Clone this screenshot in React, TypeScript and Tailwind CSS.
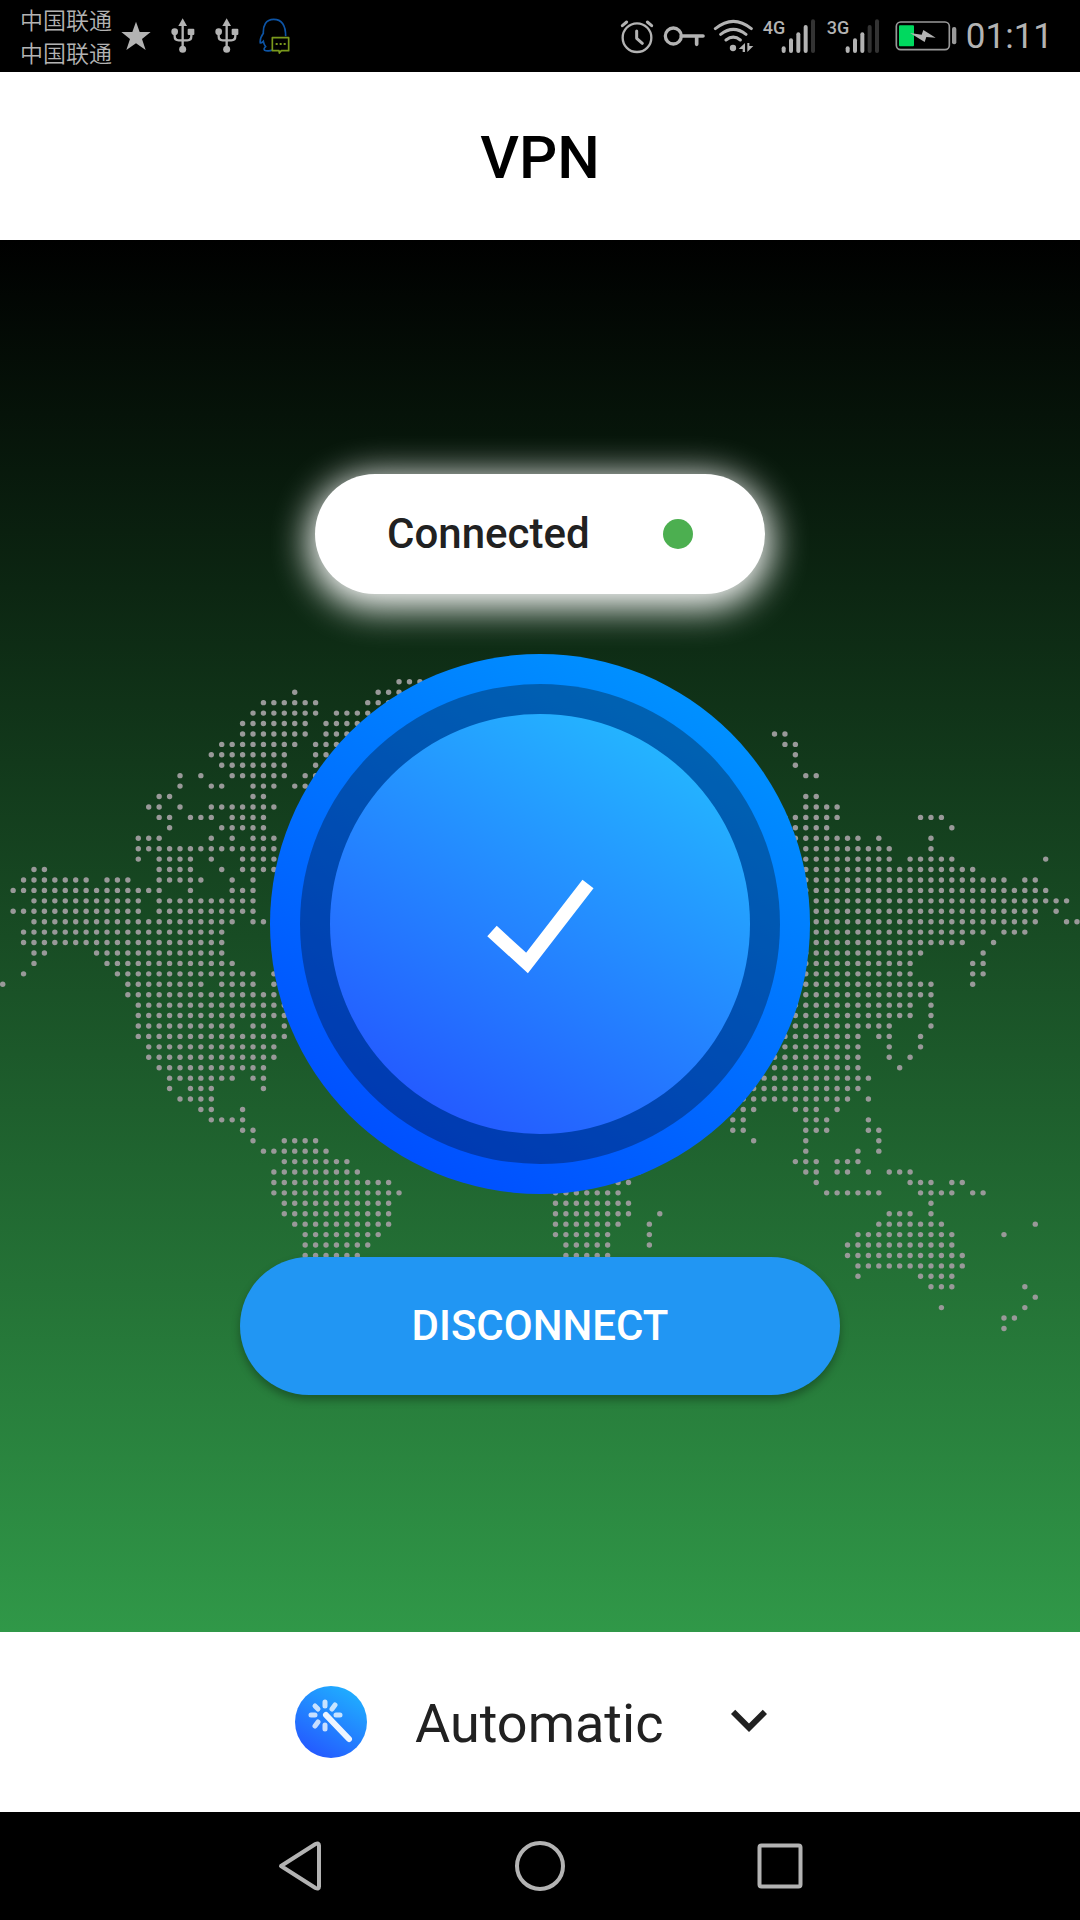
import React from "react";

type Range = [number, number];

const DOT_ROWS: Record<number, Range[]> = {
  0: [[38, 40]],
  1: [[28, 28], [36, 40]],
  2: [[25, 30], [35, 39]],
  3: [[24, 30], [32, 36]],
  4: [[23, 29], [31, 35]],
  5: [[23, 29], [31, 34], [74, 75]],
  6: [[21, 28], [30, 32], [75, 76]],
  7: [[20, 27], [30, 31], [76, 76]],
  8: [[21, 27], [30, 30], [76, 76]],
  9: [[17, 17], [19, 19], [22, 27], [29, 30], [77, 78]],
  10: [[17, 17], [20, 21], [24, 26], [28, 29]],
  11: [[15, 16], [24, 25], [77, 78]],
  12: [[14, 15], [17, 17], [20, 26], [77, 80]],
  13: [[15, 16], [18, 20], [22, 25], [75, 80], [88, 90]],
  14: [[16, 16], [21, 25], [76, 79], [91, 91]],
  15: [[13, 15], [20, 20], [22, 22], [24, 26], [76, 82], [84, 84], [89, 89]],
  16: [[13, 26], [77, 85], [89, 89]],
  17: [[13, 13], [15, 18], [20, 20], [23, 26], [77, 85], [87, 91], [100, 100]],
  18: [[3, 4], [15, 18], [21, 21], [23, 26], [77, 93]],
  19: [[2, 8], [10, 12], [15, 19], [22, 22], [24, 24], [77, 96], [98, 99]],
  20: [[1, 15], [18, 18], [22, 24], [77, 100]],
  21: [[3, 13], [15, 24], [77, 102]],
  22: [[1, 13], [15, 24], [77, 99], [101, 101]],
  23: [[3, 22], [24, 25], [77, 99], [102, 103]],
  24: [[2, 21], [77, 94], [96, 98]],
  25: [[2, 21], [77, 92], [95, 95]],
  26: [[3, 4], [9, 21], [77, 88], [94, 94]],
  27: [[3, 3], [10, 22], [77, 87], [93, 94]],
  28: [[2, 2], [11, 24], [26, 26], [77, 87], [93, 94]],
  29: [[0, 0], [12, 19], [21, 24], [26, 26], [77, 89], [93, 93]],
  30: [[12, 26], [77, 89]],
  31: [[13, 27], [76, 87], [89, 89]],
  32: [[13, 27], [76, 87], [89, 89]],
  33: [[13, 22], [24, 25], [27, 27], [76, 85], [89, 89]],
  34: [[13, 27], [75, 82], [84, 85], [88, 88]],
  35: [[14, 26], [75, 82], [85, 85], [88, 88]],
  36: [[14, 26], [74, 82], [85, 85], [87, 87]],
  37: [[15, 25], [74, 82], [86, 86]],
  38: [[16, 22], [24, 25], [73, 83]],
  39: [[16, 16], [18, 20], [25, 25], [72, 82]],
  40: [[17, 20], [71, 81], [83, 83]],
  41: [[19, 20], [23, 23], [70, 72], [76, 78], [80, 80]],
  42: [[20, 23], [70, 71], [77, 79], [83, 83]],
  43: [[23, 24], [70, 71], [77, 79], [83, 84]],
  44: [[24, 24], [27, 30], [72, 72], [77, 77], [84, 84]],
  45: [[25, 31], [77, 77], [82, 82], [84, 84]],
  46: [[27, 33], [76, 78], [80, 82]],
  47: [[26, 34], [61, 61], [77, 78], [80, 81], [83, 83], [85, 87]],
  48: [[26, 37], [59, 60], [78, 78], [87, 89], [91, 92]],
  49: [[26, 38], [53, 59], [79, 84], [88, 91], [93, 94]],
  50: [[27, 37], [53, 60], [89, 89]],
  51: [[27, 37], [53, 60], [63, 63], [85, 87], [89, 89]],
  52: [[28, 37], [53, 59], [62, 62], [84, 90], [99, 99]],
  53: [[29, 36], [53, 58], [62, 62], [82, 91], [96, 96]],
  54: [[29, 35], [54, 58], [62, 62], [81, 91]],
  55: [[29, 34], [54, 58], [81, 92]],
  56: [[82, 92]],
  57: [[82, 82], [88, 91]],
  58: [[89, 91], [98, 98]],
  59: [[99, 99]],
  60: [[90, 90], [98, 98]],
  61: [[96, 97]],
  62: [[96, 96]],
};

const STEP = 10.43;

function WorldMap() {
  const dots: React.ReactNode[] = [];
  for (const [row, ranges] of Object.entries(DOT_ROWS)) {
    for (const [from, to] of ranges) {
      for (let col = from; col <= to; col++) {
        dots.push(
          <circle key={`${row}-${col}`} cx={2.7 + col * STEP} cy={441.8 + Number(row) * STEP} r="2.7" />,
        );
      }
    }
  }
  return (
    <svg
      className="absolute inset-0 h-full w-full"
      viewBox="0 0 1080 1392"
      preserveAspectRatio="xMidYMid slice"
      fill="#999999"
      aria-hidden="true"
    >
      {dots}
    </svg>
  );
}

function StarIcon() {
  return (
    <svg className="h-[30px] w-[30px]" viewBox="364 64 90 90" fill="#b3b3b3">
      <path d="M409 66l11 31h33l-26 21 11 33-29-20-29 20 11-33-26-21h33z" />
    </svg>
  );
}

function UsbIcon() {
  return (
    <svg className="h-9 w-6" viewBox="509 56 72 108" fill="#b3b3b3">
      <path d="M544 57l13 23h-26z" />
      <path d="M544 76v74M520 98v13q0 12 12 12h26q12 0 12-12V98" fill="none" stroke="#b3b3b3" strokeWidth="7" />
      <circle cx="520" cy="97" r="10" />
      <rect x="559" y="88" width="20" height="19" rx="3" />
      <circle cx="544" cy="150" r="10.500" />
    </svg>
  );
}

function MessageIcon() {
  return (
    <svg className="h-9 w-[31px]" viewBox="769 57 93 108" fill="none">
      <path
        d="M849 112C849 80 838 61 813 61C789 61 781 80 782 103C775 113 771 123 773 132C777 132 780 129 782 127C783 134 786 139 789 143C784 147 783 151 786 154C792 157 803 156 808 153"
        stroke="#0d54a5"
        strokeWidth="5"
      />
      <path d="M809 116h49v39h-22l-6 7-1-7h-20z" fill="#000" stroke="#7a991c" strokeWidth="5" strokeLinejoin="round" />
      <path d="M819 135h6M831 135h6M843 135h6" stroke="#7a991c" strokeWidth="6" />
    </svg>
  );
}

function AlarmIcon() {
  return (
    <svg className="h-9 w-9" viewBox="56 54 108 108" fill="none" stroke="#b3b3b3" strokeLinecap="round">
      <circle cx="110" cy="113" r="43" strokeWidth="7" />
      <path d="M109 93v22l17 15" strokeWidth="9" strokeLinejoin="round" />
      <path d="M66 77l13-11M154 77l-13-11" strokeWidth="9" />
    </svg>
  );
}

function KeyIcon() {
  return (
    <svg className="h-6 w-[42px]" viewBox="192 70 126 72" fill="none" stroke="#b3b3b3">
      <circle cx="223" cy="106" r="24" strokeWidth="10" />
      <path d="M247 106h65M293 108v23" strokeWidth="11" strokeLinecap="round" />
    </svg>
  );
}

function WifiIcon() {
  return (
    <svg className="h-9 w-[42px]" viewBox="342 54 126 108" fill="none" stroke="#b3b3b3" strokeWidth="9" strokeLinecap="round">
      <path d="M349 86q54-44 108 0M365 103q38-30 76 0M381 120q22-17 43 0" />
      <circle cx="402" cy="144" r="9.500" fill="#b3b3b3" stroke="none" />
      <path d="M438 129v27h-7v-9h-12zM445 129h6v9h12l-18 18z" fill="#b3b3b3" stroke="none" />
    </svg>
  );
}

function Signal({ label, bars }: { label: string; bars: number }) {
  const tops = [142, 118, 100, 78, 61];
  return (
    <div className="flex w-[54px] items-start justify-between">
      <span className="h-9 w-[18px] font-[Roboto] text-lg leading-5 font-medium text-[#b3b3b3]">{label}</span>
      <svg className="h-9 w-9" viewBox="544 51 108 108" strokeWidth="12" strokeLinecap="round">
        {tops.map((top, i) => (
          <path key={top} d={`M${552 + i * 22} ${top}V150`} stroke={i < bars ? "#b3b3b3" : "#333333"} />
        ))}
      </svg>
    </div>
  );
}

function BatteryIcon() {
  return (
    <svg className="h-[30px] w-[63px]" viewBox="885 62 189 90" fill="none">
      <rect x="889" y="65" width="159" height="83" rx="13" stroke="#999999" strokeWidth="5" />
      <rect x="897" y="75" width="45" height="63" rx="3" fill="#00d95f" />
      <path d="M930 98l35 5 5-14 37 23-28-2-5 15z" fill="#b3b3b3" />
      <rect x="1056" y="80" width="13" height="52" rx="6" fill="#999999" />
    </svg>
  );
}

function StatusBar() {
  return (
    <header className="flex h-[72px] items-center justify-between bg-black pr-[27px] pl-5">
      <div className="flex items-center">
        <div className="w-[101px] font-['Noto_Sans_CJK_SC',sans-serif] text-[23px] leading-[33px] font-[350] text-[#b3b3b3]">
          <div>中国联通</div>
          <div>中国联通</div>
        </div>
        <div className="flex items-center gap-5">
          <StarIcon />
          <UsbIcon />
          <UsbIcon />
          <MessageIcon />
        </div>
      </div>
      <div className="flex items-center gap-2">
        <AlarmIcon />
        <KeyIcon />
        <WifiIcon />
        <div className="flex gap-2.5">
          <Signal label="4G" bars={4} />
          <Signal label="3G" bars={3} />
        </div>
        <div className="flex items-center gap-2 pl-1.5">
          <BatteryIcon />
          <time className="pt-0.5 font-[Roboto] text-[35px] leading-10 font-normal text-[#b3b3b3]">01:11</time>
        </div>
      </div>
    </header>
  );
}

function ConnectionDial() {
  return (
    <svg className="relative h-[540px] w-[540px]" viewBox="0 0 540 540" role="img" aria-label="Connected">
      <defs>
        <linearGradient id="rim" x1="0.25" y1="0.93" x2="0.75" y2="0.07">
          <stop offset="0" stopColor="#0050ff" />
          <stop offset="1" stopColor="#0090ff" />
        </linearGradient>
        <linearGradient id="face" x1="0.25" y1="0.93" x2="0.75" y2="0.07">
          <stop offset="0" stopColor="#245cff" />
          <stop offset="1" stopColor="#24b3ff" />
        </linearGradient>
      </defs>
      <circle cx="270" cy="270" r="270" fill="url(#rim)" />
      <circle cx="270" cy="270" r="240" fill="#000" fillOpacity="0.3" />
      <circle cx="270" cy="270" r="210" fill="url(#face)" />
      <path d="M222 277l35 32 61-79" fill="none" stroke="#fff" strokeWidth="14" />
    </svg>
  );
}

function WandIcon() {
  return (
    <svg className="h-[72px] w-[72px]" viewBox="0 0 72 72" aria-hidden="true">
      <defs>
        <linearGradient id="wand" x1="0.25" y1="0.93" x2="0.75" y2="0.07">
          <stop offset="0" stopColor="#245cff" />
          <stop offset="1" stopColor="#20abff" />
        </linearGradient>
      </defs>
      <circle cx="36" cy="36" r="36" fill="url(#wand)" />
      <path d="M31 29l23 24" stroke="#fff" strokeOpacity="0.92" strokeWidth="6" strokeLinecap="round" />
      <path
        d="M30 16v4M30 39v4M16 29h4M41 29h4M20 20l3 3M40 19l-3 4M20 40l3-4"
        stroke="#fff"
        strokeOpacity="0.75"
        strokeWidth="5"
        strokeLinecap="round"
      />
    </svg>
  );
}

function ServerPicker() {
  return (
    <section className="flex h-[180px] items-center justify-center gap-12 bg-white">
      <WandIcon />
      <div className="relative">
        <select
          aria-label="Server"
          className="block appearance-none bg-transparent pt-1 pr-[121px] font-[Roboto] text-[54px] leading-[72px] text-[#212121]"
        >
          <option>Automatic</option>
        </select>
        <svg className="pointer-events-none absolute top-0 right-0 h-[72px] w-[72px]" viewBox="0 0 24 24" fill="#212121" aria-hidden="true">
          <path d="M16.590 8.590L12 13.170 7.410 8.590 6 10l6 6 6-6z" />
        </svg>
      </div>
    </section>
  );
}

function NavBar() {
  return (
    <nav className="flex h-[108px] items-center justify-center gap-[180px] bg-black">
      <button type="button" aria-label="Back">
        <svg className="h-[60px] w-[60px]" viewBox="0 0 60 60" fill="none" stroke="#b3b3b3" strokeWidth="4" strokeLinejoin="round">
          <path d="M11 30L45.500 8Q49 6.500 49 9.500V50.500Q49 53.500 45.500 52z" />
        </svg>
      </button>
      <button type="button" aria-label="Home">
        <svg className="h-[60px] w-[60px]" viewBox="0 0 60 60" fill="none" stroke="#b3b3b3" strokeWidth="4">
          <circle cx="30" cy="30" r="23" />
        </svg>
      </button>
      <button type="button" aria-label="Recent apps">
        <svg className="h-[60px] w-[60px]" viewBox="0 0 60 60" fill="none" stroke="#b3b3b3" strokeWidth="4">
          <rect x="9.500" y="9.500" width="41" height="41" rx="2" />
        </svg>
      </button>
    </nav>
  );
}

export default function App() {
  return (
    <div className="flex min-h-screen flex-col bg-white font-[Roboto]">
      <StatusBar />
      <div className="flex h-[168px] items-center justify-center bg-white pt-1">
        <h1 className="text-6xl font-medium text-black">VPN</h1>
      </div>
      <main className="relative flex flex-1 flex-col items-center justify-center overflow-hidden bg-linear-to-b/srgb from-black to-[#309848] pb-1">
        <WorldMap />
        <div className="relative flex h-[120px] w-[450px] items-center justify-between rounded-full bg-white px-[72px] shadow-[0_8px_36px_6px_#ffffff]">
          <span className="text-[42px] font-medium text-[#212121]">Connected</span>
          <span className="h-[30px] w-[30px] rounded-full bg-[#4caf50]" />
        </div>
        <div className="pt-[60px] pb-[63px]">
          <ConnectionDial />
        </div>
        <button
          type="button"
          className="relative h-[138px] w-[600px] rounded-full bg-[#2196f3] text-[42px] font-medium text-white shadow-[0_5px_8px_rgba(0,0,0,0.3)]"
        >
          DISCONNECT
        </button>
      </main>
      <ServerPicker />
      <NavBar />
    </div>
  );
}
